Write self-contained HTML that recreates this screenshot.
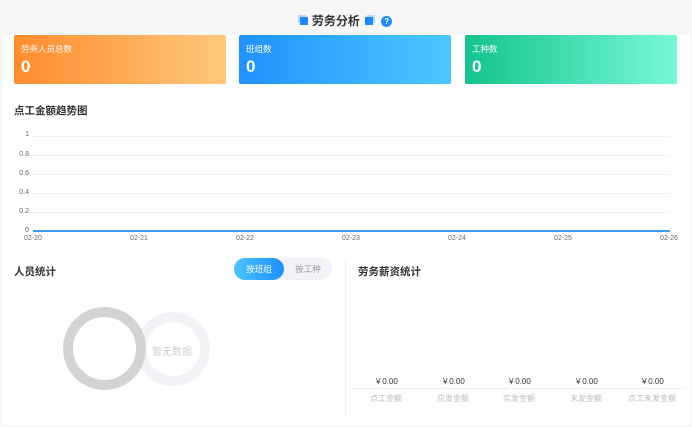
<!DOCTYPE html>
<html><head><meta charset="utf-8"><style>
*{margin:0;padding:0;box-sizing:border-box}
body{width:692px;height:427px;background:#f5f6f8;font-family:"Liberation Sans","Noto Sans CJK SC",sans-serif;position:relative;overflow:hidden}
.panel{position:absolute;left:2px;top:6px;width:688px;height:419px;background:#fff}
.hdr{position:absolute;left:2px;top:6px;width:688px;height:29px;background:#f7f7f8}
.title{position:absolute;top:12px;left:0;width:692px;text-align:center;font-size:12px;font-weight:bold;color:#333}
.card{position:absolute;top:35px;height:49px;width:212px;border-radius:2px;color:#fff}
.card .l{position:absolute;left:7px;top:8px;font-size:8.5px}
.card .v{position:absolute;left:7px;top:22px;font-size:17px;font-weight:bold}
.sec{position:absolute;font-size:10.5px;font-weight:bold;color:#333}
.yl{position:absolute;font-size:7px;color:#666;left:15px;width:14px;text-align:right}
.gl{position:absolute;left:33px;width:637px;height:1px;background:#f0f0f0}
.xl{position:absolute;top:235px;font-size:7px;color:#666;width:30px;text-align:center}
.amt{position:absolute;top:376px;font-size:8px;color:#333;width:60px;text-align:center}
.nm{position:absolute;top:393px;font-size:8px;color:#bbb;width:60px;text-align:center}
</style></head><body>
<div class="panel"></div><div class="hdr"></div>
<div class="title"><span style="display:inline-block;width:8px;height:8px;background:#1e88ff;margin-right:4px;box-shadow:-2px -2px 0 #b5d5ff"></span>劳务分析 <span style="display:inline-block;width:8px;height:8px;background:#1e88ff;margin:0 8px 0 2px;box-shadow:2px -2px 0 #b5d5ff"></span><span style="display:inline-block;width:11px;height:11px;border-radius:50%;background:#1e88ff;color:#fff;font-size:8px;line-height:11px;vertical-align:1px">?</span></div>
<div class="card" style="left:14px;background:linear-gradient(90deg,#ff8c2e,#ffc87a)"><div class="l">劳务人员总数</div><div class="v">0</div></div>
<div class="card" style="left:239px;background:linear-gradient(90deg,#2091ff,#4cc8ff)"><div class="l">班组数</div><div class="v">0</div></div>
<div class="card" style="left:465px;background:linear-gradient(90deg,#14c48c,#76f8d8)"><div class="l">工种数</div><div class="v">0</div></div>
<div class="sec" style="left:14px;top:103px">点工金额趋势图</div>
<div class="yl" style="top:131px">1</div><div class="gl" style="top:136px"></div>
<div class="yl" style="top:151px">0.8</div><div class="gl" style="top:155px"></div>
<div class="yl" style="top:170px">0.6</div><div class="gl" style="top:174px"></div>
<div class="yl" style="top:189px">0.4</div><div class="gl" style="top:193px"></div>
<div class="yl" style="top:208px">0.2</div><div class="gl" style="top:212px"></div>
<div class="yl" style="top:227px">0</div>
<div style="position:absolute;left:33px;top:230px;width:637px;height:1.5px;background:#3a9cf5"></div>
<div class="xl" style="left:18px">02-20</div><div class="xl" style="left:124px">02-21</div><div class="xl" style="left:230px">02-22</div><div class="xl" style="left:336px">02-23</div><div class="xl" style="left:442px">02-24</div><div class="xl" style="left:548px">02-25</div><div class="xl" style="left:654px">02-26</div>
<div class="sec" style="left:14px;top:264px">人员统计</div>
<div style="position:absolute;left:234px;top:258px;width:98px;height:22px;border-radius:11px;background:#f2f3f6"></div>
<div style="position:absolute;left:234px;top:258px;width:50px;height:22px;border-radius:11px;background:linear-gradient(90deg,#4cc4ff,#1e8eff);color:#fff;font-size:8.5px;line-height:22px;text-align:center">按班组</div>
<div style="position:absolute;left:284px;top:258px;width:48px;height:22px;color:#999;font-size:8.5px;line-height:22px;text-align:center">按工种</div>
<div style="position:absolute;left:345px;top:260px;width:1px;height:158px;background:#f0f0f0"></div>
<div style="position:absolute;left:136px;top:312px;width:74px;height:74px;border-radius:50%;border:10px solid #f2f3f7"></div>
<div style="position:absolute;left:63px;top:307px;width:83px;height:83px;border-radius:50%;border:10px solid #d3d3d3"></div>
<div style="position:absolute;left:152px;top:343px;font-size:10px;color:#ccc">暂无数据</div>
<div class="sec" style="left:358px;top:264px">劳务薪资统计</div>
<div style="position:absolute;left:352px;top:388px;width:334px;height:1px;background:#f0f0f0"></div>
<div class="amt" style="left:356px">￥0.00</div><div class="amt" style="left:423px">￥0.00</div><div class="amt" style="left:489px">￥0.00</div><div class="amt" style="left:556px">￥0.00</div><div class="amt" style="left:622px">￥0.00</div>
<div class="nm" style="left:356px">点工金额</div><div class="nm" style="left:423px">应发金额</div><div class="nm" style="left:489px">实发金额</div><div class="nm" style="left:556px">未发金额</div><div class="nm" style="left:618px;width:68px">点工未发金额</div>
</body></html>
